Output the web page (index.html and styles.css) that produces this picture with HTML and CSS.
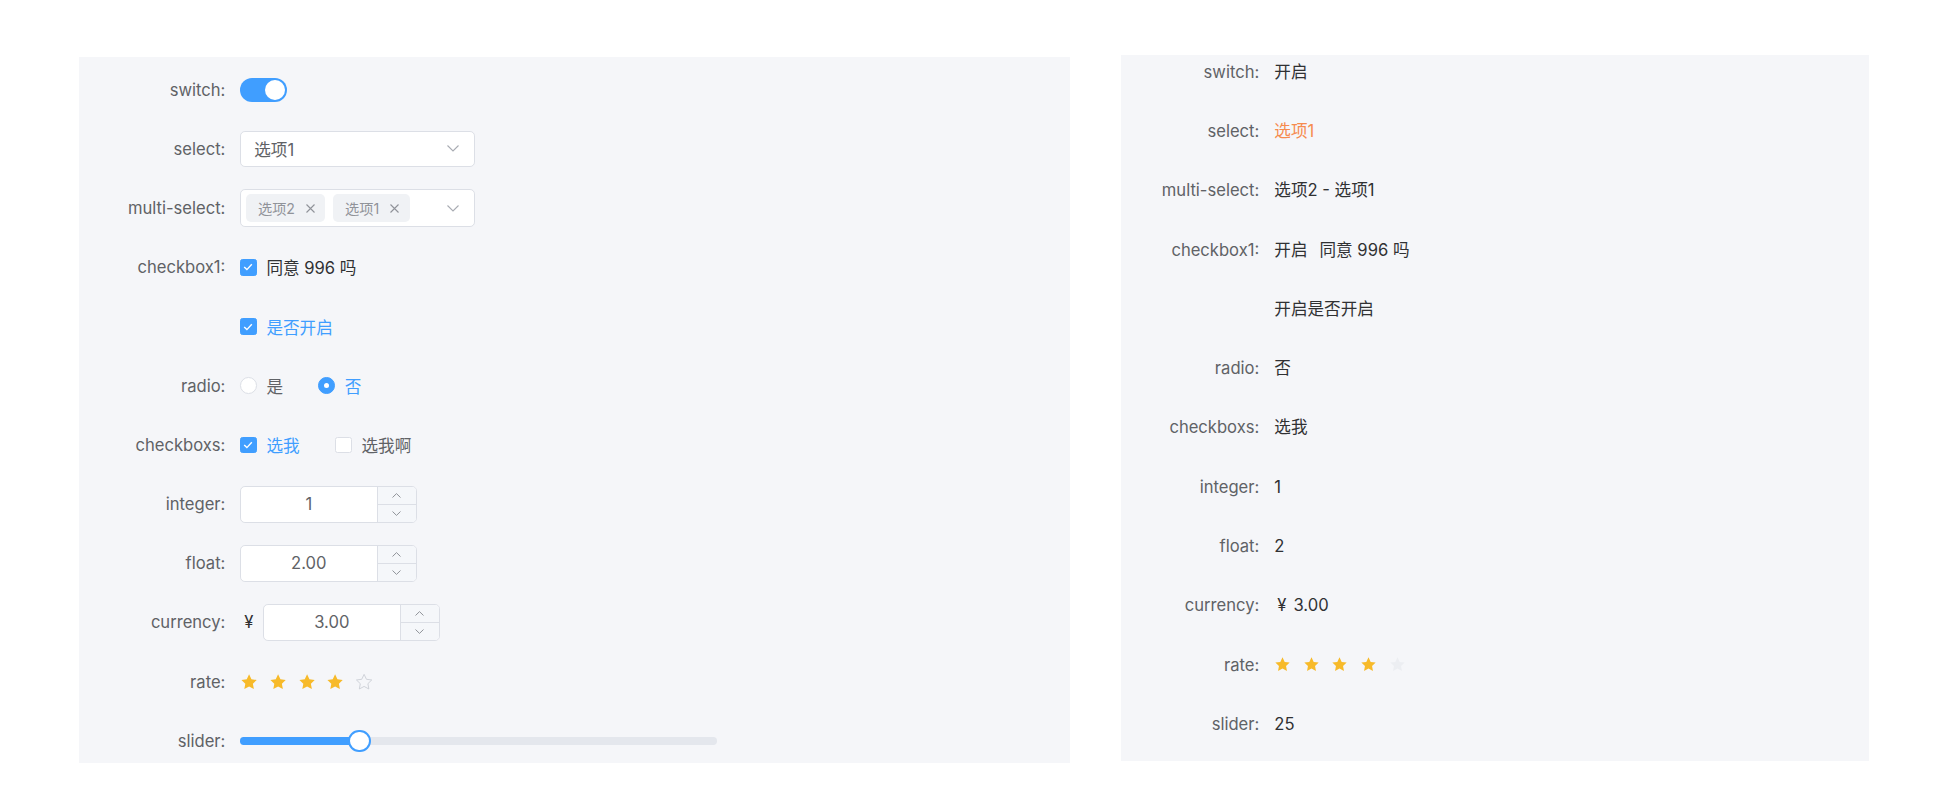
FILE: index.html
```html
<!DOCTYPE html>
<html lang="zh-CN">
<head>
<meta charset="utf-8">
<title>Form</title>
<link rel="stylesheet" href="styles.css">
</head>
<body>
<div class="page">
  <section class="panel panel-form">
    <div class="row">
      <label class="lbl">switch:</label>
      <span class="switch"><span class="knob"></span></span>
    </div>
    <div class="row">
      <label class="lbl">select:</label>
      <div class="select">
        <span class="select-text">选项1</span>
        <svg class="chev" width="12" height="7" viewBox="0 0 12 7"><path d="M0.5 0.5L6 6L11.5 0.5" fill="none" stroke="#a8abb2" stroke-width="1.1"/></svg>
      </div>
    </div>
    <div class="row">
      <label class="lbl">multi-select:</label>
      <div class="select multi">
        <div class="tags">
          <span class="tag">选项2<svg class="x" width="9" height="9" viewBox="0 0 9 9"><path d="M0.5 0.5L8.5 8.5M8.5 0.5L0.5 8.5" stroke="#909399" stroke-width="1.1"/></svg></span>
          <span class="tag">选项1<svg class="x" width="9" height="9" viewBox="0 0 9 9"><path d="M0.5 0.5L8.5 8.5M8.5 0.5L0.5 8.5" stroke="#909399" stroke-width="1.1"/></svg></span>
        </div>
        <svg class="chev" width="12" height="7" viewBox="0 0 12 7"><path d="M0.5 0.5L6 6L11.5 0.5" fill="none" stroke="#a8abb2" stroke-width="1.1"/></svg>
      </div>
    </div>
    <div class="row">
      <label class="lbl">checkbox1:</label>
      <span class="check-item"><span class="box on"><svg width="10" height="8" viewBox="0 0 10 8"><path d="M1.2 4L3.9 6.6L8.8 1.2" fill="none" stroke="#fff" stroke-width="1.4"/></svg></span><span class="ctext dark">同意 996 吗</span></span>
    </div>
    <div class="row">
      <label class="lbl"></label>
      <span class="check-item"><span class="box on"><svg width="10" height="8" viewBox="0 0 10 8"><path d="M1.2 4L3.9 6.6L8.8 1.2" fill="none" stroke="#fff" stroke-width="1.4"/></svg></span><span class="ctext blue">是否开启</span></span>
    </div>
    <div class="row">
      <label class="lbl">radio:</label>
      <div class="group">
        <span class="check-item"><span class="radio"></span><span class="ctext">是</span></span>
        <span class="check-item"><span class="radio on"><span class="dot"></span></span><span class="ctext blue">否</span></span>
      </div>
    </div>
    <div class="row">
      <label class="lbl">checkboxs:</label>
      <div class="group">
        <span class="check-item"><span class="box on"><svg width="10" height="8" viewBox="0 0 10 8"><path d="M1.2 4L3.9 6.6L8.8 1.2" fill="none" stroke="#fff" stroke-width="1.4"/></svg></span><span class="ctext blue">选我</span></span>
        <span class="check-item"><span class="box"></span><span class="ctext">选我啊</span></span>
      </div>
    </div>
    <div class="row">
      <label class="lbl">integer:</label>
      <div class="num">
        <span class="num-val">1</span>
        <span class="num-ctl">
          <span class="arr"><svg width="9" height="5" viewBox="0 0 9 5"><path d="M0.5 4.5L4.5 0.6L8.5 4.5" fill="none" stroke="#909399" stroke-width="1"/></svg></span>
          <span class="arr"><svg width="9" height="5" viewBox="0 0 9 5"><path d="M0.5 0.5L4.5 4.4L8.5 0.5" fill="none" stroke="#909399" stroke-width="1"/></svg></span>
        </span>
      </div>
    </div>
    <div class="row">
      <label class="lbl">float:</label>
      <div class="num">
        <span class="num-val">2.00</span>
        <span class="num-ctl">
          <span class="arr"><svg width="9" height="5" viewBox="0 0 9 5"><path d="M0.5 4.5L4.5 0.6L8.5 4.5" fill="none" stroke="#909399" stroke-width="1"/></svg></span>
          <span class="arr"><svg width="9" height="5" viewBox="0 0 9 5"><path d="M0.5 0.5L4.5 4.4L8.5 0.5" fill="none" stroke="#909399" stroke-width="1"/></svg></span>
        </span>
      </div>
    </div>
    <div class="row">
      <label class="lbl">currency:</label>
      <span class="prefix">¥</span>
      <div class="num">
        <span class="num-val">3.00</span>
        <span class="num-ctl">
          <span class="arr"><svg width="9" height="5" viewBox="0 0 9 5"><path d="M0.5 4.5L4.5 0.6L8.5 4.5" fill="none" stroke="#909399" stroke-width="1"/></svg></span>
          <span class="arr"><svg width="9" height="5" viewBox="0 0 9 5"><path d="M0.5 0.5L4.5 4.4L8.5 0.5" fill="none" stroke="#909399" stroke-width="1"/></svg></span>
        </span>
      </div>
    </div>
    <div class="row">
      <label class="lbl">rate:</label>
      <div class="stars">
        <svg class="star" viewBox="0 0 24 24"><path d="M12 1.8l3.1 6.5 7 .9-5.1 4.9 1.3 7L12 17.7l-6.3 3.4 1.3-7L1.9 9.2l7-.9z" fill="#f7ba2a"/></svg>
        <svg class="star" viewBox="0 0 24 24"><path d="M12 1.8l3.1 6.5 7 .9-5.1 4.9 1.3 7L12 17.7l-6.3 3.4 1.3-7L1.9 9.2l7-.9z" fill="#f7ba2a"/></svg>
        <svg class="star" viewBox="0 0 24 24"><path d="M12 1.8l3.1 6.5 7 .9-5.1 4.9 1.3 7L12 17.7l-6.3 3.4 1.3-7L1.9 9.2l7-.9z" fill="#f7ba2a"/></svg>
        <svg class="star" viewBox="0 0 24 24"><path d="M12 1.8l3.1 6.5 7 .9-5.1 4.9 1.3 7L12 17.7l-6.3 3.4 1.3-7L1.9 9.2l7-.9z" fill="#f7ba2a"/></svg>
        <svg class="star" viewBox="0 0 24 24"><path d="M12 1.8l3.1 6.5 7 .9-5.1 4.9 1.3 7L12 17.7l-6.3 3.4 1.3-7L1.9 9.2l7-.9z" fill="none" stroke="#c8cbd2" stroke-width="1.1" stroke-linejoin="round"/></svg>
      </div>
    </div>
    <div class="row">
      <label class="lbl">slider:</label>
      <div class="slider">
        <div class="slider-fill" style="width:25%"></div>
        <span class="thumb" style="left:25%"></span>
      </div>
    </div>
  </section>

  <section class="panel panel-view">
    <div class="row"><label class="lbl">switch:</label><span class="val">开启</span></div>
    <div class="row"><label class="lbl">select:</label><span class="val orange">选项1</span></div>
    <div class="row"><label class="lbl">multi-select:</label><span class="val">选项2 - 选项1</span></div>
    <div class="row"><label class="lbl">checkbox1:</label><span class="val">开启</span><span class="val gap">同意 996 吗</span></div>
    <div class="row"><label class="lbl"></label><span class="val">开启是否开启</span></div>
    <div class="row"><label class="lbl">radio:</label><span class="val">否</span></div>
    <div class="row"><label class="lbl">checkboxs:</label><span class="val">选我</span></div>
    <div class="row"><label class="lbl">integer:</label><span class="val">1</span></div>
    <div class="row"><label class="lbl">float:</label><span class="val">2</span></div>
    <div class="row"><label class="lbl">currency:</label><span class="val yen">¥</span><span class="val">3.00</span></div>
    <div class="row">
      <label class="lbl">rate:</label>
      <div class="stars small">
        <svg class="star" viewBox="0 0 24 24"><path d="M12 1.8l3.1 6.5 7 .9-5.1 4.9 1.3 7L12 17.7l-6.3 3.4 1.3-7L1.9 9.2l7-.9z" fill="#f7ba2a"/></svg>
        <svg class="star" viewBox="0 0 24 24"><path d="M12 1.8l3.1 6.5 7 .9-5.1 4.9 1.3 7L12 17.7l-6.3 3.4 1.3-7L1.9 9.2l7-.9z" fill="#f7ba2a"/></svg>
        <svg class="star" viewBox="0 0 24 24"><path d="M12 1.8l3.1 6.5 7 .9-5.1 4.9 1.3 7L12 17.7l-6.3 3.4 1.3-7L1.9 9.2l7-.9z" fill="#f7ba2a"/></svg>
        <svg class="star" viewBox="0 0 24 24"><path d="M12 1.8l3.1 6.5 7 .9-5.1 4.9 1.3 7L12 17.7l-6.3 3.4 1.3-7L1.9 9.2l7-.9z" fill="#f7ba2a"/></svg>
        <svg class="star" viewBox="0 0 24 24"><path d="M12 1.8l3.1 6.5 7 .9-5.1 4.9 1.3 7L12 17.7l-6.3 3.4 1.3-7L1.9 9.2l7-.9z" fill="#eceef2"/></svg>
      </div>
    </div>
    <div class="row"><label class="lbl">slider:</label><span class="val">25</span></div>
  </section>
</div>
</body>
</html>
```

FILE: styles.css
```css
html, body {
  margin: 0;
  background: #ffffff;
}

body {
  font-family: Inter, "Noto Sans CJK SC", sans-serif;
  font-size: 16.6px;
  color: #303133;
}

.page {
  display: flex;
  align-items: flex-start;
  gap: 51px;
  padding-left: 79px;
}

.panel {
  background: #f5f6f9;
  height: 706px;
  box-sizing: border-box;
  flex: none;
}

.panel-form {
  width: 991px;
  margin-top: 57px;
  padding-top: 14.3px;
}

.panel-view {
  width: 748px;
  margin-top: 55px;
  padding-top: 4.7px;
}

.row {
  display: flex;
  align-items: center;
  height: 37px;
  margin-bottom: 22.2px;
}

.lbl {
  flex: none;
  width: 146.4px;
  margin-right: 14.6px;
  text-align: right;
  color: #606266;
  white-space: nowrap;
}

.panel-view .row {
  height: 24px;
  line-height: 24px;
  margin-bottom: 35.3px;
}

.panel-view .lbl {
  width: 138.3px;
  margin-right: 15px;
}

.val {
  color: #303133;
  white-space: pre;
}

.val.orange {
  color: #f68b4e;
}

.val.gap {
  margin-left: 12px;
}

.val.yen {
  margin: 0 7px 0 3px;
}

/* switch */
.switch {
  display: flex;
  justify-content: flex-end;
  align-items: center;
  box-sizing: border-box;
  width: 47.5px;
  height: 24.4px;
  padding: 0 2.3px;
  border-radius: 12.2px;
  background: #409eff;
}

.knob {
  width: 19.8px;
  height: 19.8px;
  border-radius: 50%;
  background: #ffffff;
}

/* select */
.select {
  display: flex;
  align-items: center;
  justify-content: space-between;
  box-sizing: border-box;
  width: 235.3px;
  height: 36.8px;
  padding: 0 15px 0 13.3px;
  background: #ffffff;
  border: 1px solid #dcdfe6;
  border-radius: 4.9px;
}

.select-text {
  color: #606266;
}

.select.multi {
  padding-left: 5px;
  height: 37.4px;
}

.tags {
  display: flex;
  gap: 7.6px;
}

.tag {
  display: flex;
  align-items: center;
  gap: 11px;
  height: 28px;
  padding: 0 10.4px 0 12px;
  background: #f0f2f5;
  border-radius: 4.9px;
  color: #909399;
  font-size: 14.2px;
}

.x {
  display: block;
}

.chev {
  display: block;
  flex: none;
}

/* checkbox & radio */
.group {
  display: flex;
  align-items: center;
  gap: 35.5px;
}

.check-item {
  display: flex;
  align-items: center;
  gap: 9.6px;
}

.box {
  display: flex;
  align-items: center;
  justify-content: center;
  box-sizing: border-box;
  width: 16.8px;
  height: 16.8px;
  border: 1px solid #dcdfe6;
  border-radius: 2.5px;
  background: #ffffff;
}

.box.on {
  background: #409eff;
  border-color: #409eff;
}

.box svg {
  display: block;
}

.radio {
  display: flex;
  align-items: center;
  justify-content: center;
  box-sizing: border-box;
  width: 16.8px;
  height: 16.8px;
  border: 1px solid #dcdfe6;
  border-radius: 50%;
  background: #ffffff;
}

.radio.on {
  background: #409eff;
  border-color: #409eff;
}

.dot {
  width: 5px;
  height: 5px;
  border-radius: 50%;
  background: #ffffff;
}

.ctext {
  color: #606266;
}

.ctext.dark {
  color: #303133;
}

.ctext.blue {
  color: #409eff;
}

/* number input */
.num {
  display: flex;
  box-sizing: border-box;
  width: 176.6px;
  height: 36.8px;
  background: #ffffff;
  border: 1px solid #dcdfe6;
  border-radius: 4.9px;
  overflow: hidden;
}

.num-val {
  flex: 1;
  display: flex;
  align-items: center;
  justify-content: center;
  color: #606266;
}

.num-ctl {
  display: flex;
  flex-direction: column;
  width: 38px;
  border-left: 1px solid #dcdfe6;
  background: #f5f7fa;
}

.arr {
  flex: 1;
  display: flex;
  align-items: center;
  justify-content: center;
}

.arr + .arr {
  border-top: 1px solid #dcdfe6;
}

.arr svg {
  display: block;
}

.prefix {
  color: #303133;
  margin: 0 9.7px 0 4.2px;
}

/* rate */
.stars {
  display: flex;
  align-items: center;
  gap: 10.6px;
}

.star {
  display: block;
  width: 18.2px;
  height: 18.2px;
}

.stars.small {
  gap: 11.6px;
}

.stars.small .star {
  width: 17px;
  height: 17px;
}

/* slider */
.slider {
  position: relative;
  width: 477.5px;
  height: 7.4px;
  border-radius: 3.7px;
  background: #e4e7ed;
}

.slider-fill {
  height: 100%;
  border-radius: 3.7px;
  background: #409eff;
}

.thumb {
  position: absolute;
  top: 50%;
  width: 22.6px;
  height: 22.6px;
  margin: -11.3px 0 0 -11.3px;
  box-sizing: border-box;
  border: 2.5px solid #409eff;
  border-radius: 50%;
  background: #ffffff;
}
```
